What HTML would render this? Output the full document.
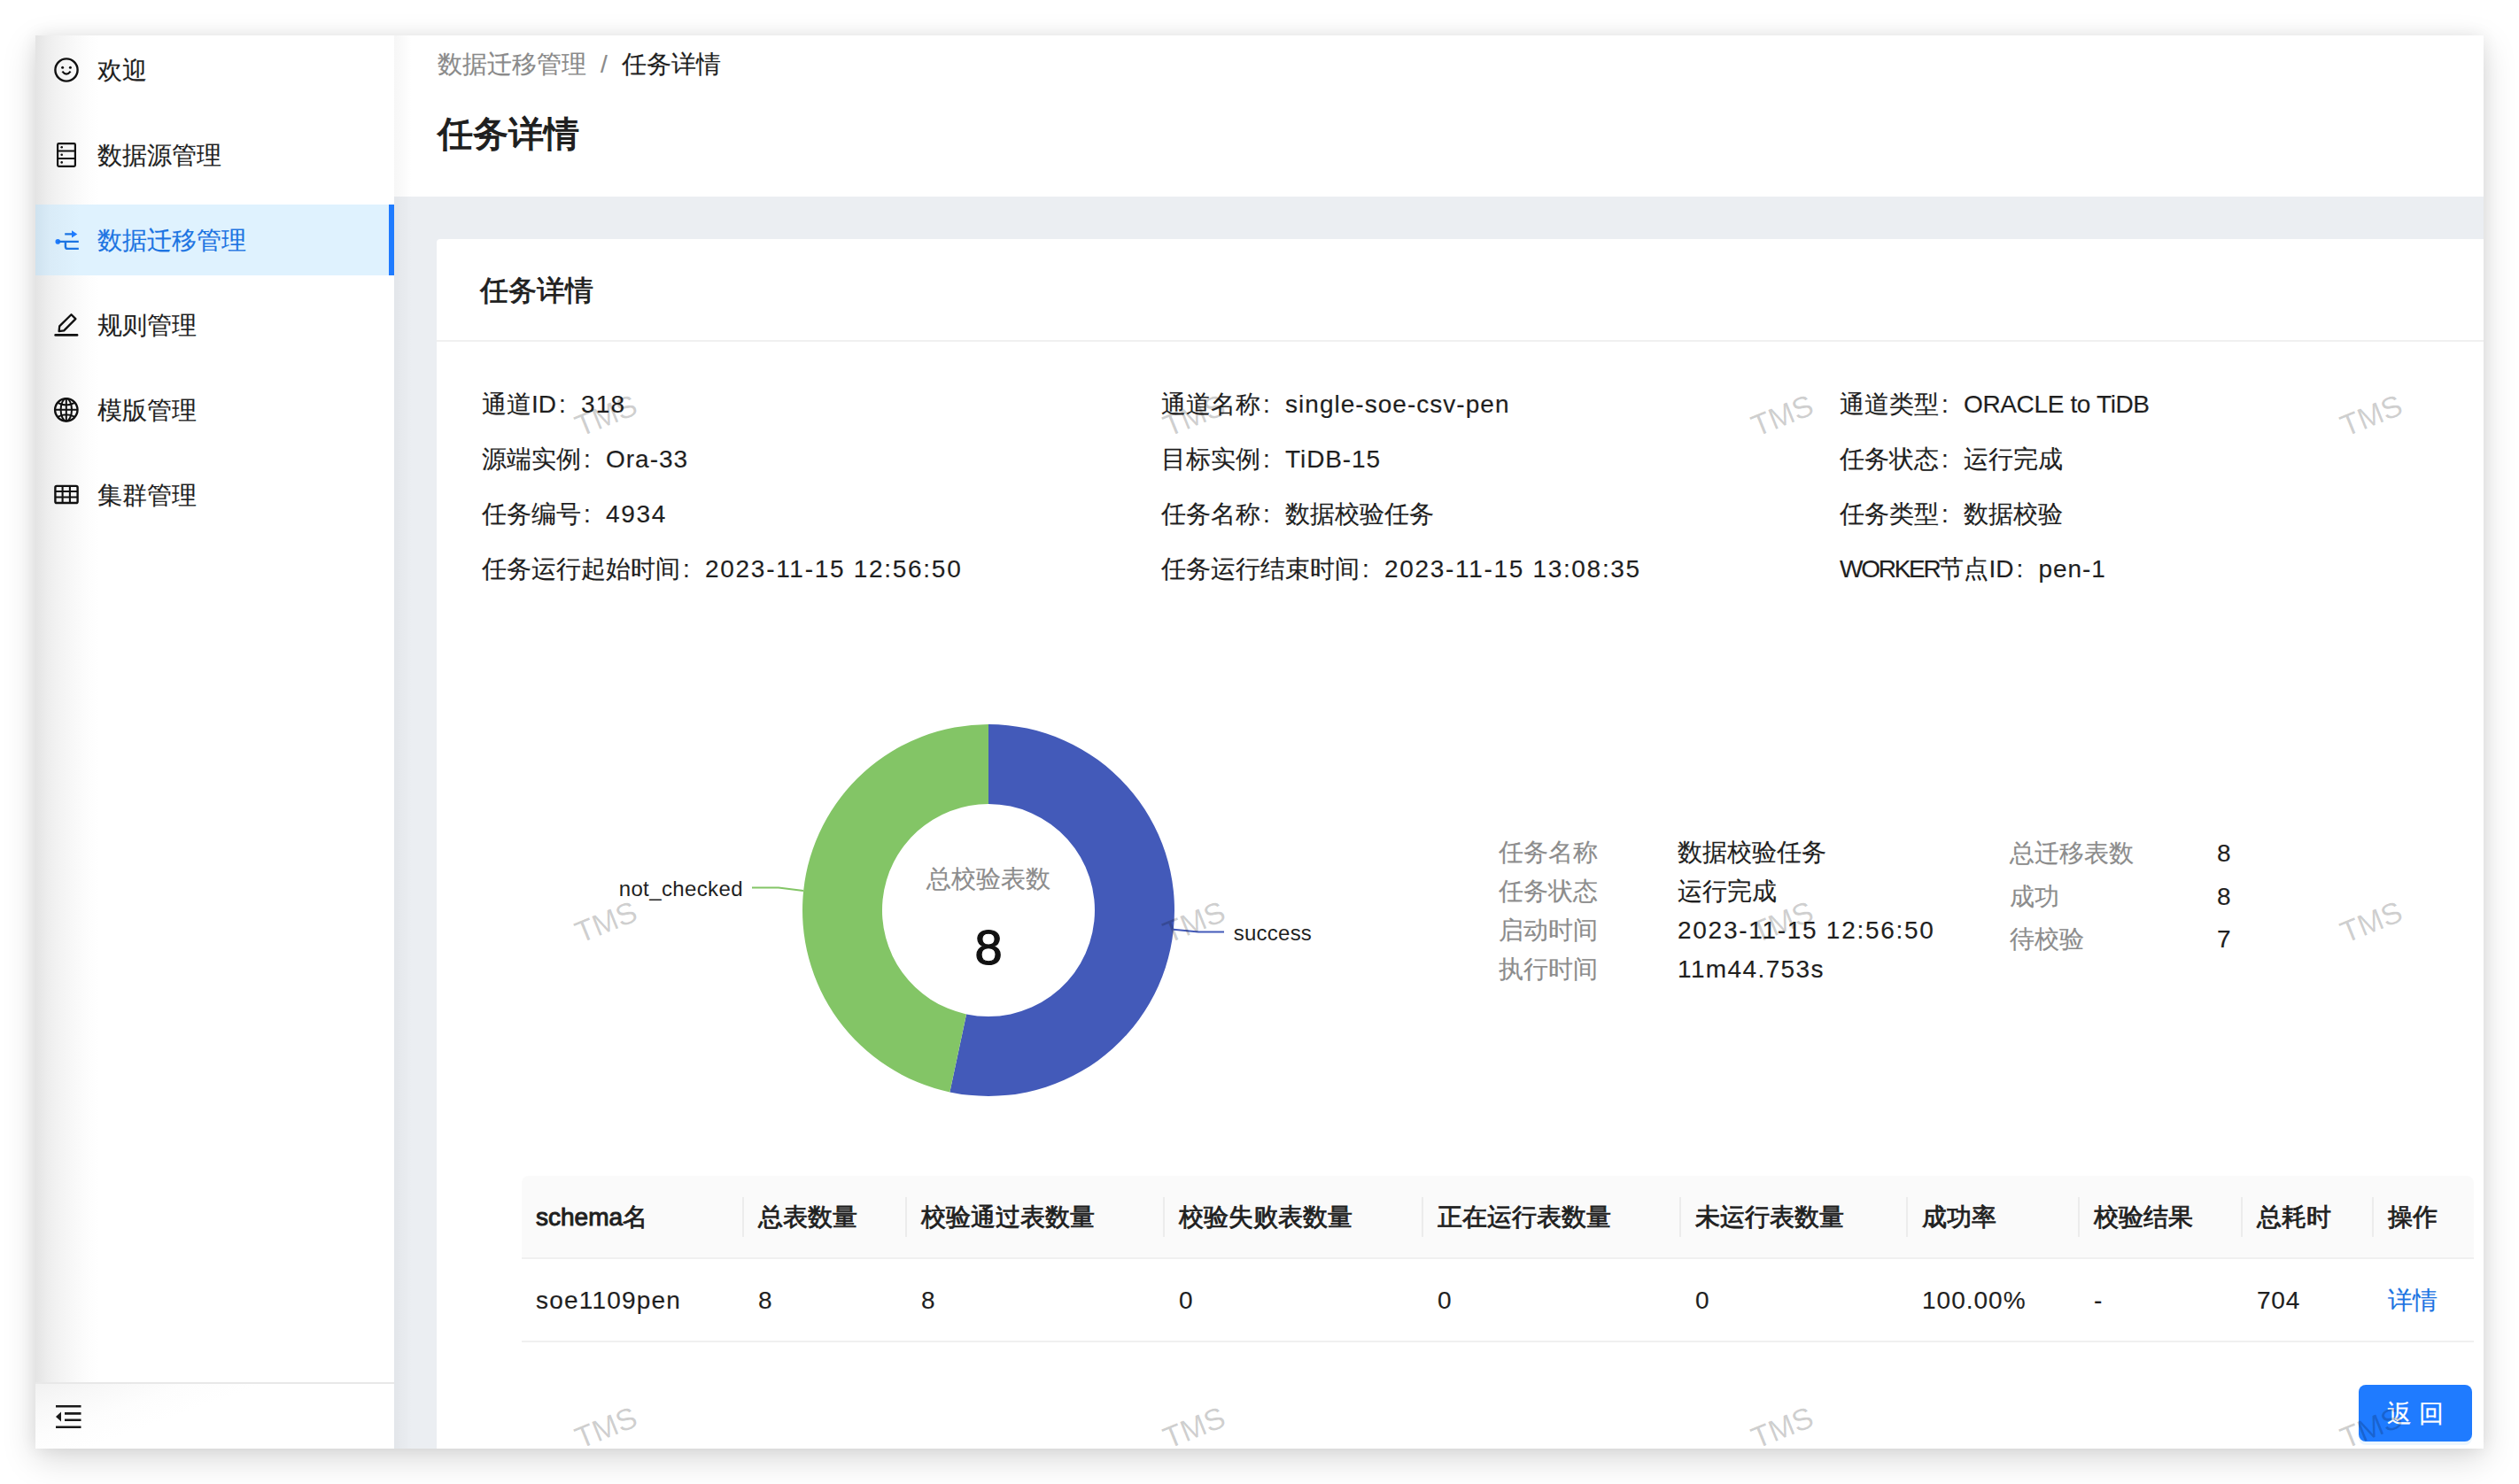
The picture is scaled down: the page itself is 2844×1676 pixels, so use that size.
<!DOCTYPE html>
<html><head><meta charset="utf-8">
<style>
*{box-sizing:border-box;margin:0;padding:0}
html,body{width:2844px;height:1676px;overflow:hidden;background:#fff;font-family:"Liberation Sans",sans-serif;color:#1f1f1f}
.abs{position:absolute}
.t{position:absolute;white-space:nowrap;-webkit-text-stroke:0.15px currentColor}
.col{display:inline-block;width:28px;padding-left:3px}
#win{position:absolute;left:40px;top:40px;width:2764px;height:1596px;overflow:hidden;background:#ebeef2;box-shadow:0 12px 36px rgba(0,0,0,0.15),0 0 18px rgba(0,0,0,0.07)}
#side{position:absolute;left:0;top:0;width:405px;height:1596px;background:linear-gradient(to right,#e4e4e4 0,#e8e8e8 6px,#ededed 13px,#f2f2f2 24px,#f9f9f9 45px,#fdfdfd 60px,#fff 72px)}
.act{background:linear-gradient(to right,#cfe2ef 0,#d9ebf7 16px,#dff2fe 50px)}
#hdr{position:absolute;left:405px;top:0;width:2359px;height:182px;background:#fff}
#card{position:absolute;left:453px;top:230px;width:2400px;height:1500px;background:#fff;border-radius:4px}
#mshade{position:absolute;left:405px;top:0;width:20px;height:1596px;background:linear-gradient(to right,rgba(0,0,0,0.035),rgba(0,0,0,0))}
.wm{position:absolute;width:120px;height:40px;line-height:40px;text-align:center;font-size:34px;color:rgba(0,0,0,0.2);transform:rotate(-22deg);white-space:nowrap}
</style></head><body>
<div id="win">
<div id="side">
<svg class="abs" style="left:21px;top:25px;overflow:visible" width="29" height="28" viewBox="0 0 29 28"><circle cx="14" cy="14" r="12.6" fill="none" stroke="#111" stroke-width="2.4"/><circle cx="9.6" cy="11.2" r="1.5" fill="#111"/><circle cx="18.4" cy="11.2" r="1.5" fill="#111"/><path d="M9.4 15.6Q14 21.8 18.6 15.6" fill="none" stroke="#111" stroke-width="2.2"/></svg>
<div class="t" style="left:70px;top:-0.5px;font-size:28px;line-height:80px;color:#1f1f1f">欢迎</div>
<svg class="abs" style="left:21px;top:121px;overflow:visible" width="29" height="28" viewBox="0 0 29 28"><rect x="4.1" y="1.1" width="19.8" height="25.7" rx="1.3" fill="none" stroke="#111" stroke-width="2.2"/><path d="M4.1 9.6H23.9M4.1 17.9H23.9" stroke="#111" stroke-width="2"/><circle cx="8.7" cy="5.3" r="1.3" fill="#111"/><circle cx="8.7" cy="13.8" r="1.3" fill="#111"/><circle cx="8.7" cy="22.4" r="1.3" fill="#111"/></svg>
<div class="t" style="left:70px;top:95.5px;font-size:28px;line-height:80px;color:#1f1f1f">数据源管理</div>
<div class="abs act" style="left:0;top:191px;width:405px;height:80px"><div class="abs" style="left:399px;top:0;width:6px;height:80px;background:#1f7bff"></div></div>
<svg class="abs" style="left:21px;top:217px;overflow:visible" width="29" height="28" viewBox="0 0 29 28"><circle cx="4.3" cy="15.9" r="2.8" fill="#1f7bff"/><path d="M12.2 7.4H21M4.3 15.9H27.8M12.9 15.9V21.4Q12.9 23.9 15.4 23.9H27.8" fill="none" stroke="#1c74e2" stroke-width="2.4"/><path d="M20 3.3L26.3 7.4L20 11.6Z" fill="#1f7bff"/></svg>
<div class="t" style="left:70px;top:191.5px;font-size:28px;line-height:80px;color:#1c74e2">数据迁移管理</div>
<svg class="abs" style="left:21px;top:313px;overflow:visible" width="29" height="28" viewBox="0 0 29 28"><path d="M5.6 21.2L6.2 15.4L19.5 2.2L24.4 7.1L11.2 20.4Z" fill="none" stroke="#111" stroke-width="2.3" stroke-linejoin="round"/><path d="M1.6 25.4H26.1" stroke="#111" stroke-width="2.6" stroke-linecap="round"/></svg>
<div class="t" style="left:70px;top:287.5px;font-size:28px;line-height:80px;color:#1f1f1f">规则管理</div>
<svg class="abs" style="left:21px;top:409px;overflow:visible" width="29" height="28" viewBox="0 0 29 28"><circle cx="13.8" cy="13.8" r="12.7" fill="none" stroke="#111" stroke-width="2.4"/><ellipse cx="13.8" cy="13.8" rx="6.2" ry="12.7" fill="none" stroke="#111" stroke-width="2"/><path d="M13.8 1.1V26.5M1.1 13.8H26.5M4.1 5.8Q13.8 11 23.5 5.8M4.1 21.8Q13.8 16.6 23.5 21.8" fill="none" stroke="#111" stroke-width="2"/></svg>
<div class="t" style="left:70px;top:383.5px;font-size:28px;line-height:80px;color:#1f1f1f">模版管理</div>
<svg class="abs" style="left:21px;top:508.4px;overflow:visible" width="29" height="28" viewBox="0 0 29 28"><rect x="1.4" y="0.9" width="25.2" height="19.1" rx="1.6" fill="none" stroke="#111" stroke-width="2.4"/><path d="M1.4 7H26.6M1.4 13.5H26.6M9.6 0.9V20M17.9 0.9V20" stroke="#111" stroke-width="2.1"/></svg>
<div class="t" style="left:70px;top:479.5px;font-size:28px;line-height:80px;color:#1f1f1f">集群管理</div>
<div class="abs" style="left:0;top:1521px;width:405px;height:75px;background:linear-gradient(160deg,#f1f1f1 0,#f8f8f8 30px,#fdfdfd 60px,#fff 90px)"></div>
<div class="abs" style="left:0;top:1521px;width:405px;height:2px;background:#e8e8e8"></div>
<svg class="abs" style="left:22px;top:1546px" width="30" height="28" viewBox="0 0 30 28"><path d="M1 2.2H29.5M11 10.4H29.5M11 17.8H29.5M1 25.8H29.5" stroke="#1a1a1a" stroke-width="2.6"/><path d="M1 14.1L7 8.6V19.6Z" fill="#1a1a1a"/></svg>
</div>
<div id="hdr"></div>
<div id="card"></div>
<div id="mshade"></div>
<div class="abs" style="left:453px;top:344px;width:2400px;height:2px;background:#f0f0f0"></div>
<div class="t" style="left:454px;top:10.7px;font-size:28px;line-height:44px;color:#1f1f1f;font-weight:normal;"><span style="color:#8a8a8a">数据迁移管理</span><span style="color:#8a8a8a;display:inline-block;width:40px;text-align:center">/</span><span>任务详情</span></div>
<div class="t" style="left:454px;top:83.0px;font-size:39.5px;line-height:56px;color:#1f1f1f;font-weight:500;-webkit-text-stroke:1.3px #1f1f1f">任务详情</div>
<div class="t" style="left:502px;top:262.9px;font-size:31.5px;line-height:50px;color:#1f1f1f;font-weight:500;-webkit-text-stroke:0.8px #1f1f1f">任务详情</div>
<div class="t" style="left:504px;top:385.8px;font-size:28px;line-height:62px;color:#1f1f1f;font-weight:normal;">通道ID<span class="col">:</span><span style="letter-spacing:1.20px">318</span></div>
<div class="t" style="left:504px;top:447.8px;font-size:28px;line-height:62px;color:#1f1f1f;font-weight:normal;">源端实例<span class="col">:</span><span style="letter-spacing:1.00px">Ora-33</span></div>
<div class="t" style="left:504px;top:509.8px;font-size:28px;line-height:62px;color:#1f1f1f;font-weight:normal;">任务编号<span class="col">:</span><span style="letter-spacing:1.67px">4934</span></div>
<div class="t" style="left:504px;top:571.8px;font-size:28px;line-height:62px;color:#1f1f1f;font-weight:normal;">任务运行起始时间<span class="col">:</span><span style="letter-spacing:1.71px">2023-11-15 12:56:50</span></div>
<div class="t" style="left:1271px;top:385.8px;font-size:28px;line-height:62px;color:#1f1f1f;font-weight:normal;">通道名称<span class="col">:</span><span style="letter-spacing:1.03px">single-soe-csv-pen</span></div>
<div class="t" style="left:1271px;top:447.8px;font-size:28px;line-height:62px;color:#1f1f1f;font-weight:normal;">目标实例<span class="col">:</span><span style="letter-spacing:0.92px">TiDB-15</span></div>
<div class="t" style="left:1271px;top:509.8px;font-size:28px;line-height:62px;color:#1f1f1f;font-weight:normal;">任务名称<span class="col">:</span>数据校验任务</div>
<div class="t" style="left:1271px;top:571.8px;font-size:28px;line-height:62px;color:#1f1f1f;font-weight:normal;">任务运行结束时间<span class="col">:</span><span style="letter-spacing:1.68px">2023-11-15 13:08:35</span></div>
<div class="t" style="left:2037px;top:385.8px;font-size:28px;line-height:62px;color:#1f1f1f;font-weight:normal;">通道类型<span class="col">:</span><span style="letter-spacing:-0.36px">ORACLE to TiDB</span></div>
<div class="t" style="left:2037px;top:447.8px;font-size:28px;line-height:62px;color:#1f1f1f;font-weight:normal;">任务状态<span class="col">:</span>运行完成</div>
<div class="t" style="left:2037px;top:509.8px;font-size:28px;line-height:62px;color:#1f1f1f;font-weight:normal;">任务类型<span class="col">:</span>数据校验</div>
<div class="t" style="left:2037px;top:571.8px;font-size:28px;line-height:62px;color:#1f1f1f;font-weight:normal;"><span style="letter-spacing:-2.26px">WORKER</span>节点ID<span class="col">:</span><span style="letter-spacing:0.95px">pen-1</span></div>
<div class="t" style="left:1652px;top:900.8px;font-size:28px;line-height:44px;color:#8c8c8c;font-weight:normal;">任务名称</div>
<div class="t" style="left:1854px;top:900.8px;font-size:28px;line-height:44px;color:#1f1f1f;font-weight:normal;">数据校验任务</div>
<div class="t" style="left:1652px;top:944.8px;font-size:28px;line-height:44px;color:#8c8c8c;font-weight:normal;">任务状态</div>
<div class="t" style="left:1854px;top:944.8px;font-size:28px;line-height:44px;color:#1f1f1f;font-weight:normal;">运行完成</div>
<div class="t" style="left:1652px;top:988.8px;font-size:28px;line-height:44px;color:#8c8c8c;font-weight:normal;">启动时间</div>
<div class="t" style="left:1854px;top:988.8px;font-size:28px;line-height:44px;color:#1f1f1f;font-weight:normal;"><span style="letter-spacing:1.72px">2023-11-15 12:56:50</span></div>
<div class="t" style="left:1652px;top:1032.8px;font-size:28px;line-height:44px;color:#8c8c8c;font-weight:normal;">执行时间</div>
<div class="t" style="left:1854px;top:1032.8px;font-size:28px;line-height:44px;color:#1f1f1f;font-weight:normal;"><span style="letter-spacing:1.39px">11m44.753s</span></div>
<div class="t" style="left:2229px;top:900.4px;font-size:28px;line-height:48px;color:#8c8c8c;font-weight:normal;">总迁移表数</div>
<div class="t" style="left:2463px;top:900.4px;font-size:28px;line-height:48px;color:#1f1f1f;font-weight:normal;">8</div>
<div class="t" style="left:2229px;top:948.6px;font-size:28px;line-height:48px;color:#8c8c8c;font-weight:normal;">成功</div>
<div class="t" style="left:2463px;top:948.6px;font-size:28px;line-height:48px;color:#1f1f1f;font-weight:normal;">8</div>
<div class="t" style="left:2229px;top:996.8px;font-size:28px;line-height:48px;color:#8c8c8c;font-weight:normal;">待校验</div>
<div class="t" style="left:2463px;top:996.8px;font-size:28px;line-height:48px;color:#1f1f1f;font-weight:normal;">7</div>
<svg class="abs" style="left:-40px;top:-40px" width="2844" height="1676" viewBox="0 0 2844 1676">
<g transform="translate(1116 1028)">
<path d="M0.00 -210.00A210 210 0 1 1 -43.66 205.41L-24.95 117.38A120 120 0 1 0 0.00 -120.00Z" fill="#435ab9"/>
<path d="M-43.66 205.41A210 210 0 0 1 0.00 -210.00L0.00 -120.00A120 120 0 0 0 -24.95 117.38Z" fill="#83c566"/>
</g>
<path d="M849 1002.5H879L907 1006" fill="none" stroke="#83c566" stroke-width="2"/>
<path d="M1325 1049.7L1353 1052.5H1382" fill="none" stroke="#435ab9" stroke-width="2"/>
<text x="698.7" y="1012" font-size="24" fill="#1f1f1f" letter-spacing="0.37">not_checked</text>
<text x="1392.8" y="1062" font-size="24" fill="#1f1f1f" letter-spacing="0.23">success</text>
</svg>
<div class="t" style="left:1006px;top:931.1px;font-size:28px;line-height:44px;color:#8c8c8c;font-weight:normal;">总校验表数</div>
<div class="t" style="left:976px;top:990px;width:200px;text-align:center;font-size:56px;line-height:80px;color:#111;-webkit-text-stroke:1.2px #111">8</div>
<div class="abs" style="left:549px;top:1288px;width:2204px;height:92px;background:#fafafa;border-radius:8px 8px 0 0"></div>
<div class="abs" style="left:549px;top:1380px;width:2204px;height:2px;background:#f0f0f0"></div>
<div class="abs" style="left:549px;top:1474px;width:2204px;height:2px;background:#f0f0f0"></div>
<div class="t" style="left:565px;top:1309.5px;font-size:28px;line-height:50px;color:#1f1f1f;font-weight:500;-webkit-text-stroke:0.8px #1f1f1f"><span style="-webkit-text-stroke:1px #1f1f1f">schema</span>名</div>
<div class="abs" style="left:798px;top:1312px;width:2px;height:45px;background:#ececec"></div>
<div class="t" style="left:565px;top:1404.0px;font-size:28px;line-height:50px;color:#1f1f1f;font-weight:normal;"><span style="letter-spacing:1.20px">soe1109pen</span></div>
<div class="t" style="left:816px;top:1309.5px;font-size:28px;line-height:50px;color:#1f1f1f;font-weight:500;-webkit-text-stroke:0.8px #1f1f1f">总表数量</div>
<div class="abs" style="left:982px;top:1312px;width:2px;height:45px;background:#ececec"></div>
<div class="t" style="left:816px;top:1404.0px;font-size:28px;line-height:50px;color:#1f1f1f;font-weight:normal;">8</div>
<div class="t" style="left:1000px;top:1309.5px;font-size:28px;line-height:50px;color:#1f1f1f;font-weight:500;-webkit-text-stroke:0.8px #1f1f1f">校验通过表数量</div>
<div class="abs" style="left:1273px;top:1312px;width:2px;height:45px;background:#ececec"></div>
<div class="t" style="left:1000px;top:1404.0px;font-size:28px;line-height:50px;color:#1f1f1f;font-weight:normal;">8</div>
<div class="t" style="left:1291px;top:1309.5px;font-size:28px;line-height:50px;color:#1f1f1f;font-weight:500;-webkit-text-stroke:0.8px #1f1f1f">校验失败表数量</div>
<div class="abs" style="left:1565px;top:1312px;width:2px;height:45px;background:#ececec"></div>
<div class="t" style="left:1291px;top:1404.0px;font-size:28px;line-height:50px;color:#1f1f1f;font-weight:normal;">0</div>
<div class="t" style="left:1583px;top:1309.5px;font-size:28px;line-height:50px;color:#1f1f1f;font-weight:500;-webkit-text-stroke:0.8px #1f1f1f">正在运行表数量</div>
<div class="abs" style="left:1856px;top:1312px;width:2px;height:45px;background:#ececec"></div>
<div class="t" style="left:1583px;top:1404.0px;font-size:28px;line-height:50px;color:#1f1f1f;font-weight:normal;">0</div>
<div class="t" style="left:1874px;top:1309.5px;font-size:28px;line-height:50px;color:#1f1f1f;font-weight:500;-webkit-text-stroke:0.8px #1f1f1f">未运行表数量</div>
<div class="abs" style="left:2112px;top:1312px;width:2px;height:45px;background:#ececec"></div>
<div class="t" style="left:1874px;top:1404.0px;font-size:28px;line-height:50px;color:#1f1f1f;font-weight:normal;">0</div>
<div class="t" style="left:2130px;top:1309.5px;font-size:28px;line-height:50px;color:#1f1f1f;font-weight:500;-webkit-text-stroke:0.8px #1f1f1f">成功率</div>
<div class="abs" style="left:2306px;top:1312px;width:2px;height:45px;background:#ececec"></div>
<div class="t" style="left:2130px;top:1404.0px;font-size:28px;line-height:50px;color:#1f1f1f;font-weight:normal;"><span style="letter-spacing:1.00px">100.00%</span></div>
<div class="t" style="left:2324px;top:1309.5px;font-size:28px;line-height:50px;color:#1f1f1f;font-weight:500;-webkit-text-stroke:0.8px #1f1f1f">校验结果</div>
<div class="abs" style="left:2490px;top:1312px;width:2px;height:45px;background:#ececec"></div>
<div class="t" style="left:2324px;top:1404.0px;font-size:28px;line-height:50px;color:#1f1f1f;font-weight:normal;">-</div>
<div class="t" style="left:2508px;top:1309.5px;font-size:28px;line-height:50px;color:#1f1f1f;font-weight:500;-webkit-text-stroke:0.8px #1f1f1f">总耗时</div>
<div class="abs" style="left:2638px;top:1312px;width:2px;height:45px;background:#ececec"></div>
<div class="t" style="left:2508px;top:1404.0px;font-size:28px;line-height:50px;color:#1f1f1f;font-weight:normal;"><span style="letter-spacing:0.75px">704</span></div>
<div class="t" style="left:2656px;top:1309.5px;font-size:28px;line-height:50px;color:#1f1f1f;font-weight:500;-webkit-text-stroke:0.8px #1f1f1f">操作</div>
<div class="t" style="left:2656px;top:1404.0px;font-size:28px;line-height:50px;color:#1f1f1f;font-weight:normal;"><span style="color:#1c74e2">详情</span></div>
<div class="abs" style="left:2623px;top:1524px;width:128px;height:64px;background:#1f7bff;border-radius:8px;box-shadow:0 4px 0 rgba(5,145,255,0.08)"></div>
<div class="t" style="left:2623px;top:1524.5px;font-size:28px;line-height:64px;color:#fff;font-weight:normal;width:128px;text-align:center">返 回</div>
<div class="wm" style="left:584px;top:408.5px">TMS</div>
<div class="wm" style="left:1248.2px;top:408.5px">TMS</div>
<div class="wm" style="left:1912.4px;top:408.5px">TMS</div>
<div class="wm" style="left:2576.6px;top:408.5px">TMS</div>
<div class="wm" style="left:584px;top:980.5px">TMS</div>
<div class="wm" style="left:1248.2px;top:980.5px">TMS</div>
<div class="wm" style="left:1912.4px;top:980.5px">TMS</div>
<div class="wm" style="left:2576.6px;top:980.5px">TMS</div>
<div class="wm" style="left:584px;top:1552px">TMS</div>
<div class="wm" style="left:1248.2px;top:1552px">TMS</div>
<div class="wm" style="left:1912.4px;top:1552px">TMS</div>
<div class="wm" style="left:2576.6px;top:1552px">TMS</div>
</div>
</body></html>
